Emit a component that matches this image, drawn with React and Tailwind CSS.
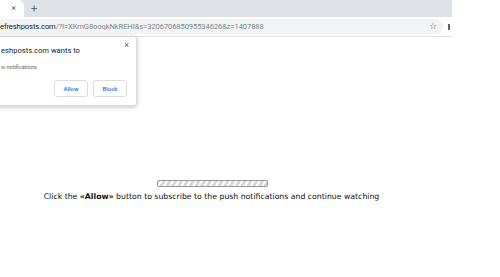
import React from "react";

export default function App() {
  return (
    <div className="relative w-[500px] h-[277px] bg-white overflow-hidden" style={{ fontFamily: "Roboto, 'Noto Sans', sans-serif" }}>
      {/* tab strip */}
      <div className="flex h-[17px] w-[452px] bg-[#dee1e6]">
        <div className="flex w-[24px] items-center justify-end rounded-tr-[6px] bg-white pr-[8px] text-[9px] text-[#5f6368]">×</div>
        <div className="ml-[7px] flex items-center text-[11px] leading-none text-[#5f6368]">+</div>
      </div>
      {/* toolbar */}
      <div className="flex h-[20px] w-[452px] items-center border-b border-[#e3e3e3] bg-white">
        <div className="flex h-[15px] w-[443px] items-center rounded-r-full bg-[#f1f3f4] text-[7.6px] tracking-[-0.1px]">
          <span className="text-[#202124]">efreshposts.com</span>
          <span className="text-[#80868b]">/?l=XKmG8ooqkNkREHI&amp;s=320670685095534626&amp;z=1407888</span>
          <span className="ml-auto mr-[6px] text-[9px] text-[#5f6368]">☆</span>
        </div>
        <div className="ml-[5px] h-[6px] w-[2px] bg-[#5f6368]" />
      </div>

      {/* permission popup */}
      <div className="absolute left-[-4px] top-[36px] h-[70px] w-[141px] rounded-[3px] border border-[#dadce0] bg-white shadow-[0_1px_4px_rgba(0,0,0,0.25)]">
        <div className="absolute right-[7px] top-[2px] text-[9px] text-[#5f6368]">×</div>
        <div className="pl-[4px] pt-[8px] text-[7.6px] text-[#202124]">eshposts.com wants to</div>
        <div className="pl-[4px] pt-[7px] text-[5.5px] text-[#5f6368]">w notifications</div>
        <div className="mt-[8px] flex justify-end gap-[5px] pr-[9px]">
          <div className="flex h-[17px] w-[34px] items-center justify-center rounded-[3px] border border-[#dadce0] text-[6px] font-medium text-[#1a73e8]">Allow</div>
          <div className="flex h-[17px] w-[34px] items-center justify-center rounded-[3px] border border-[#dadce0] text-[6px] font-medium text-[#1a73e8]">Block</div>
        </div>
      </div>

      {/* content */}
      <div className="mt-[143px] flex w-[423px] flex-col items-center" style={{ fontFamily: "'DejaVu Sans', Verdana, sans-serif" }}>
        <div className="ml-[1px] h-[7px] w-[111px] rounded-[2px] border border-[#9a9a9a] bg-[repeating-linear-gradient(-60deg,#d8d8d8_0px,#d8d8d8_3px,#ffffff_3px,#ffffff_5px)]" />
        <div className="mt-[4px] whitespace-nowrap text-[7.75px] text-[#111]">
          Click the <b>«Allow»</b> button to subscribe to the push notifications and continue watching
        </div>
      </div>
    </div>
  );
}
